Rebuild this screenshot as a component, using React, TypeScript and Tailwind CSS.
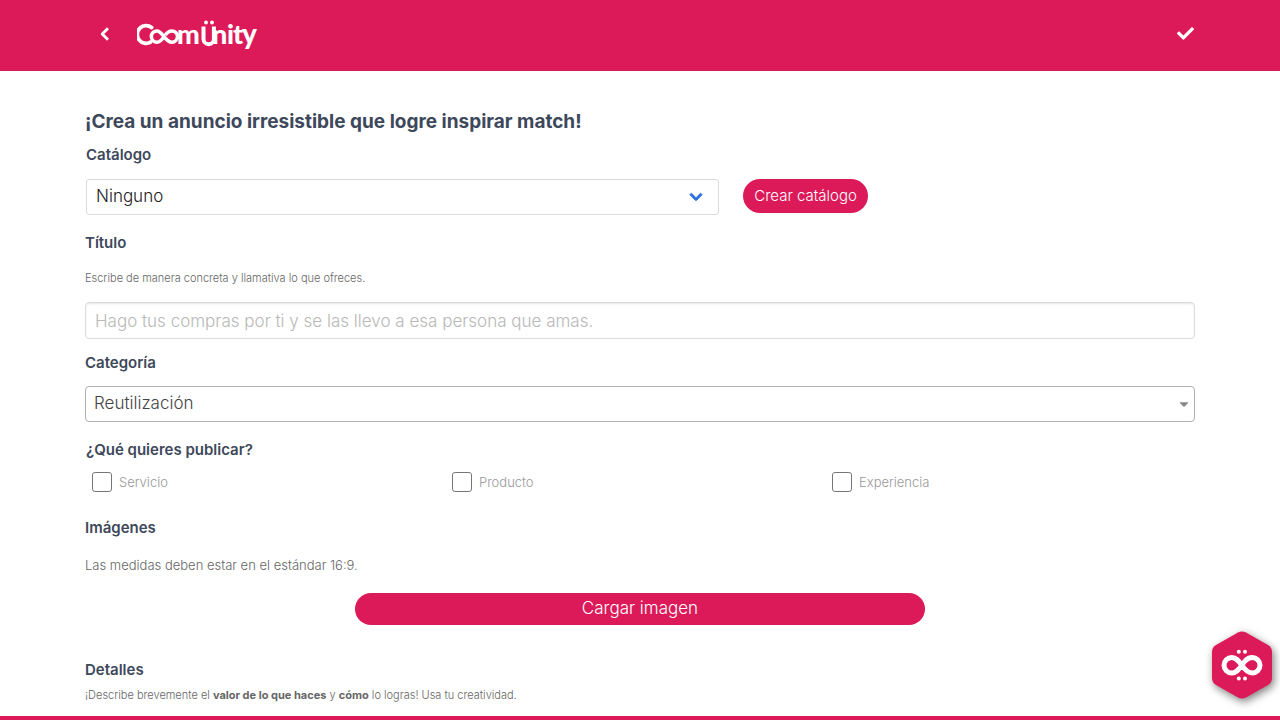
import { useState } from "react";
import { FaCheck, FaChevronDown, FaCaretDown } from "react-icons/fa";

const labelClass = "block text-[15px] leading-5 font-semibold text-[#3d485b]";

function Wordmark() {
  return (
    <svg viewBox="0 0 122 34" className="h-[34px] w-[122px]" fill="#fff" role="img" aria-label="CoomÜnity">
      <path
        d="M14.600 10.600A8.800 8.800 0 1 0 13.500 25.100"
        fill="none"
        stroke="#fff"
        strokeWidth="3.8"
        strokeLinecap="round"
      />
      <path
        d="M27.200 19.600C24.800 23.100 22.800 25.300 20 25.300A5.700 5.700 0 1 1 20 13.900C25.500 13.900 28 25.300 34.800 25.300A5.700 5.700 0 1 0 34.800 13.900C31.800 13.900 29.800 15.800 28.200 18"
        fill="none"
        stroke="#fff"
        strokeWidth="3.5"
      />
      <g fontFamily="Lato, sans-serif" fontWeight="900">
        <text x="40" y="27" fontSize="27">m</text>
        <text x="75" y="27" fontSize="27">n</text>
        <text x="90" y="27" fontSize="27">i</text>
        <text x="96" y="27" fontSize="27">t</text>
        <text x="105" y="27" fontSize="28">y</text>
      </g>
      <path
        d="M66.500 9.500V22a5.200 5.200 0 0 0 10.400 0V9.500"
        fill="none"
        stroke="#fff"
        strokeWidth="4"
      />
      <circle cx="69" cy="5.500" r="1.900" />
      <circle cx="75" cy="5.500" r="1.900" />
    </svg>
  );
}

function Badge() {
  return (
    <svg viewBox="0 0 62 68" className="h-[68px] w-[62px] drop-shadow-[2px_3px_4px_rgba(0,0,0,0.5)]" aria-hidden="true">
      <path
        d="M27 1.6Q31 -.6 35 1.6L57 14Q61 16.300 61 21V47Q61 51.700 57 54L35 66.400Q31 68.600 27 66.400L5 54Q1 51.700 1 47V21Q1 16.300 5 14Z"
        fill="#dc1a5a"
      />
      <path
        d="M34 30C29.500 35.500 26.500 42 20.800 42A7.800 7.800 0 1 1 20.800 26.400C25.200 26.400 27.500 29.500 30.800 34.200C34 39 36.700 42 41.200 42A7.800 7.800 0 1 0 41.200 26.400C38 26.400 35.800 28 34 30"
        fill="none"
        stroke="#fff"
        strokeWidth="5"
      />
      <g fill="#fff">
        <circle cx="27.800" cy="20.800" r="2" />
        <circle cx="34" cy="20.800" r="2" />
        <circle cx="27.800" cy="47.500" r="2" />
        <circle cx="34" cy="47.500" r="2" />
      </g>
    </svg>
  );
}

function Choice({ label }: { label: string }) {
  return (
    <label className="flex items-center gap-[7px] text-[13px] leading-5 font-light text-[#999]">
      <input
        type="checkbox"
        className="size-5 appearance-none rounded-[3px] border border-[#767676] bg-white checked:bg-[#dc1a5a]"
      />
      {label}
    </label>
  );
}

export default function App() {
  const [title, setTitle] = useState("");
  return (
    <div className="min-h-screen bg-white font-['Inter',sans-serif]">
      <header className="bg-[#dc1a5a]">
        <div className="mx-auto flex h-[71px] max-w-[1140px] items-center pr-4 pb-1 pl-[15px]">
          <button type="button" aria-label="Volver" className="ml-3 flex w-4 justify-center text-white">
            <svg viewBox="0 0 14 16" className="h-4 w-[14px]" fill="none" stroke="currentColor" strokeWidth="2.800" aria-hidden="true">
              <path d="M10 2.200L4.200 8L10 13.800" strokeLinejoin="round" />
            </svg>
          </button>
          <a href="#inicio" className="ml-6">
            <Wordmark />
          </a>
          <button type="button" aria-label="Guardar" className="ml-auto text-white">
            <FaCheck size={17} />
          </button>
        </div>
      </header>

      <main className="mx-auto max-w-[1140px] px-[15px] pt-[37px] pb-[17px]">
        <h1 className="text-[19px] leading-7 font-bold text-[#3d485b]">
          ¡Crea un anuncio irresistible que logre inspirar match!
        </h1>

        <section className="mt-[9px] pl-px">
          <label htmlFor="catalogo" className={labelClass}>
            Catálogo
          </label>
          <div className="mt-[14px] flex items-start gap-6">
            <div className="relative w-[57.1%]">
              <select
                id="catalogo"
                className="block h-9 w-full appearance-none rounded-[3px] border border-[#dbdbdb] bg-white px-[9px] text-[17px] font-light text-[#222]"
              >
                <option>Ninguno</option>
              </select>
              <FaChevronDown
                size={14}
                strokeWidth={36}
                className="pointer-events-none absolute top-[11px] right-4 text-[#3273dc]"
              />
            </div>
            <button
              type="button"
              className="h-[34px] rounded-full bg-[#dc1a5a] px-[11px] text-[15px] font-light text-white"
            >
              Crear catálogo
            </button>
          </div>
        </section>

        <label htmlFor="titulo" className={`${labelClass} mt-[18px]`}>
          Título
        </label>
        <p className="mt-[17px] text-[11px] leading-4 font-light text-[#666]">
          Escribe de manera concreta y llamativa lo que ofreces.
        </p>
        <input
          id="titulo"
          type="text"
          value={title}
          onChange={(e) => setTitle(e.target.value)}
          placeholder="Hago tus compras por ti y se las llevo a esa persona que amas."
          className="mt-4 block h-[37px] w-full rounded-[4px] border border-[#dbdbdb] px-[9px] text-[17px] font-light text-[#333] shadow-[inset_0_1px_2px_rgba(10,10,10,0.1)] placeholder:text-[#b8b8b8]"
        />

        <label htmlFor="categoria" className={`${labelClass} mt-[14px]`}>
          Categoría
        </label>
        <div className="relative mt-[13px]">
          <select
            id="categoria"
            className="block h-9 w-full appearance-none rounded-[4px] border border-[#b0b0b0] bg-white px-2 text-[17px] font-light text-[#444]"
          >
            <option>Reutilización</option>
          </select>
          <FaCaretDown size={14} className="pointer-events-none absolute top-[11px] right-1 text-[#888]" />
        </div>

        <fieldset className="mt-[18px]">
          <legend className={`${labelClass} pl-px`}>¿Qué quieres publicar?</legend>
          <div className="mt-3 grid grid-cols-[360fr_380fr_363fr] pl-[7px]">
            <Choice label="Servicio" />
            <Choice label="Producto" />
            <Choice label="Experiencia" />
          </div>
        </fieldset>

        <h2 className={`${labelClass} mt-[26px]`}>Imágenes</h2>
        <p className="mt-[19px] text-[13px] leading-4 font-light text-[#666]">
          Las medidas deben estar en el estándar 16:9.
        </p>
        <button
          type="button"
          className="mx-auto mt-5 block h-8 w-full max-w-[570px] rounded-full bg-[#dc1a5a] text-[17px] font-light text-white"
        >
          Cargar imagen
        </button>

        <h2 className={`${labelClass} mt-[35px]`}>Detalles</h2>
        <p className="mt-[7px] text-[11px] leading-4 font-light text-[#666]">
          ¡Describe brevemente el <strong className="font-bold">valor de lo que haces</strong> y{" "}
          <strong className="font-bold">cómo</strong> lo logras! Usa tu creatividad.
        </p>
      </main>

      <div className="fixed inset-x-0 bottom-0 h-1 bg-[#dc1a5a]" />
      <button type="button" aria-label="Menú CoomÜnity" className="fixed right-[7px] bottom-[21px]">
        <Badge />
      </button>
    </div>
  );
}
